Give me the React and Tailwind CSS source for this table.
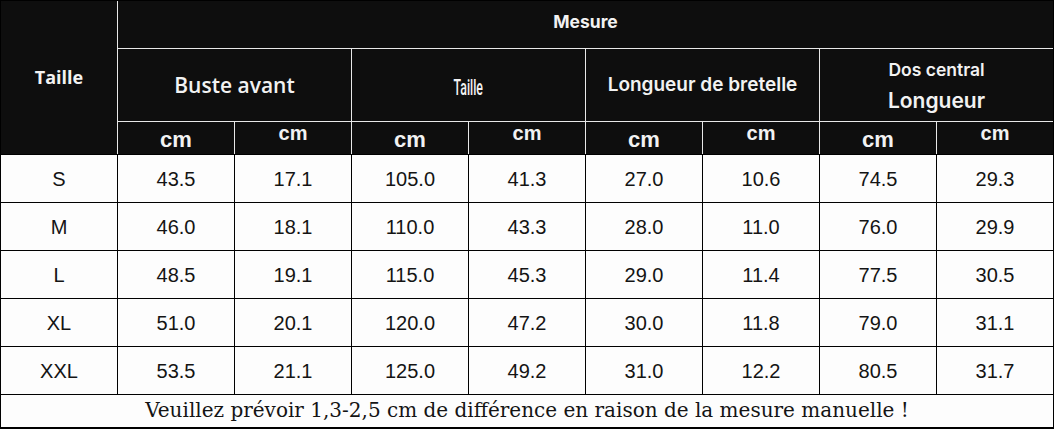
import React from "react";

const rows = [
  ["S", "43.5", "17.1", "105.0", "41.3", "27.0", "10.6", "74.5", "29.3"],
  ["M", "46.0", "18.1", "110.0", "43.3", "28.0", "11.0", "76.0", "29.9"],
  ["L", "48.5", "19.1", "115.0", "45.3", "29.0", "11.4", "77.5", "30.5"],
  ["XL", "51.0", "20.1", "120.0", "47.2", "30.0", "11.8", "79.0", "31.1"],
  ["XXL", "53.5", "21.1", "125.0", "49.2", "31.0", "12.2", "80.5", "31.7"],
];

const H = "bg-[#0e0e0e] text-[#f2f2f2] flex items-center justify-center";

export default function App() {
  return (
    <div className="w-[1055px] h-[429px] bg-white">
      <div className="w-[1054px] border border-black bg-black">
        <div className="grid grid-cols-[repeat(9,116px)] grid-rows-[47px_72px_32px] gap-px bg-[#e8e8e8]">
          <div className={`${H} row-span-3 font-['Open_Sans',sans-serif] font-bold text-[18px] pb-[0px]`}>Taille</div>
          <div className={`${H} col-span-8 font-['Inter',sans-serif] font-bold text-[17.5px] pb-[4px]`}>Mesure</div>
          <div className={`${H} col-span-2 font-['Open_Sans',sans-serif] font-semibold text-[21px] pt-[2px]`}>Buste avant</div>
          <div className={`${H} col-span-2 pt-[4px]`}>
            <span className="inline-block scale-x-[0.56] font-['Roboto',sans-serif] font-medium text-[22px]">Taille</span>
          </div>
          <div className={`${H} col-span-2 font-['Inter',sans-serif] font-semibold text-[19px] pt-[0px]`}>Longueur de bretelle</div>
          <div className={`${H} col-span-2 flex-col font-['Inter',sans-serif] font-semibold leading-none gap-[11px] pt-[2px]`}>
            <span className="text-[17.5px]">Dos central</span>
            <span className="text-[21px]">Longueur</span>
          </div>
          {[0, 1, 2, 3, 4, 5, 6, 7].map((i) =>
            i % 2 === 0 ? (
              <div key={i} className={`${H} font-['Liberation_Sans',sans-serif] font-bold text-[22px] pt-[2px]`}>cm</div>
            ) : (
              <div key={i} className={`${H} font-['Liberation_Sans',sans-serif] font-bold text-[20px] pb-[10px]`}>cm</div>
            )
          )}
        </div>
        <div className="grid grid-cols-[repeat(9,116px)] auto-rows-[47px] gap-px bg-black border-t border-black">
          {rows.map((r) =>
            r.map((c, j) => (
              <div key={r[0] + j} className="bg-[#fdfdfd] flex items-center justify-center font-['Liberation_Sans',sans-serif] text-[20px] text-[#141414] pt-[1px]">
                {c}
              </div>
            ))
          )}
          <div className="col-span-9 h-[32px] bg-[#fdfdfd] flex items-center justify-center font-['DejaVu_Serif',serif] text-[20px] text-[#141414] pb-[2px]">
            Veuillez prévoir 1,3-2,5 cm de différence en raison de la mesure manuelle !
          </div>
        </div>
      </div>
    </div>
  );
}
